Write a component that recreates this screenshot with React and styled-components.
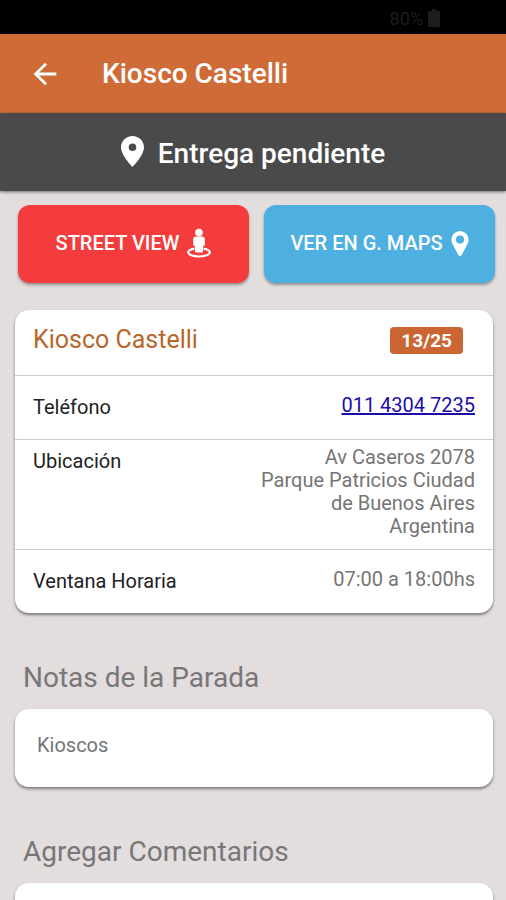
import React from 'react';
import styled, { createGlobalStyle } from 'styled-components';
import { MdArrowBack } from 'react-icons/md';

const GlobalStyle = createGlobalStyle`
  * {
    box-sizing: border-box;
  }

  body {
    margin: 0;
    background: #e3dddd;
    font-family: Roboto, 'Liberation Sans', sans-serif;
  }
`;

const StatusBar = styled.div`
  display: flex;
  align-items: center;
  justify-content: flex-end;
  gap: 5px;
  height: 34px;
  padding: 2px 66px 0 0;
  background: #000;
  color: #1d1d1d;
  font-size: 18px;
`;

const HeaderElement = styled.header`
  display: flex;
  align-items: center;
  gap: 40px;
  height: 79px;
  padding: 0 28px;
  background: #cf6b36;
  color: #fff;
`;

const BackButton = styled.button`
  display: flex;
  padding: 0;
  border: 0;
  background: none;
  color: inherit;
  cursor: pointer;
`;

const HeaderTitle = styled.h1`
  margin: 0;
  font-weight: 500;
  font-size: 28px;
  line-height: 32px;
`;

const StatusBanner = styled.div`
  display: flex;
  align-items: flex-start;
  justify-content: center;
  gap: 14px;
  height: 78px;
  padding-top: 23px;
  background: #4a4a4a;
  box-shadow: 0 1px 3px rgba(0, 0, 0, 0.5);
  color: #fff;
`;

const BannerText = styled.p`
  margin: 0;
  padding-top: 2px;
  font-weight: 500;
  font-size: 28px;
  line-height: 32px;
`;

const Actions = styled.div`
  display: flex;
  gap: 15px;
  padding: 14px 11px 0 18px;
`;

const ActionButton = styled.button`
  display: flex;
  flex: 1;
  align-items: center;
  justify-content: center;
  gap: 8px;
  height: 78px;
  padding: 0 0 2px;
  border: 0;
  border-radius: 12px;
  background: ${({ $color }) => $color};
  box-shadow: 0 2px 3px rgba(0, 0, 0, 0.35);
  color: #fff;
  font-family: inherit;
  font-weight: 500;
  font-size: 20px;
  line-height: 23px;
  white-space: nowrap;
  cursor: pointer;
`;

const Content = styled.main`
  padding: 27px 13px 15px 15px;
`;

const Card = styled.section`
  overflow: hidden;
  border-radius: 14px;
  background: #fff;
  box-shadow: 0 2px 3px rgba(0, 0, 0, 0.45);
`;

const Row = styled.div`
  display: flex;
  align-items: ${({ $top }) => ($top ? 'flex-start' : 'center')};
  justify-content: space-between;
  min-height: 64px;
  padding: 6px 18px 11px;

  & + & {
    border-top: 1px solid #cdcdcd;
  }
`;

const CardTitle = styled.h2`
  margin: 0;
  color: #b9652b;
  font-weight: 400;
  font-size: 25px;
  line-height: 48px;
`;

const Badge = styled.span`
  margin-right: 12px;
  padding: 0 11px;
  border-radius: 4px;
  background: #cb6531;
  color: #fff;
  font-weight: 700;
  font-size: 19px;
  line-height: 27px;
`;

const Label = styled.span`
  padding-top: 4px;
  color: #222;
  font-size: 20px;
  line-height: 23px;
`;

const Value = styled.span`
  max-width: 215px;
  color: #757575;
  font-size: 20px;
  line-height: 23px;
  text-align: right;
`;

const PhoneLink = styled.a`
  color: #1a0dab;
`;

const SectionTitle = styled.h2`
  margin: 0;
  padding: 48px 8px 15px;
  color: #777;
  font-weight: 400;
  font-size: 28px;
  line-height: 33px;
`;

const Note = styled.p`
  margin: 0;
  padding: 25px 22px 30px;
  color: #757575;
  font-size: 20px;
  line-height: 23px;
`;

const CommentInput = styled.textarea`
  display: block;
  width: 100%;
  height: 120px;
  padding: 24px 22px;
  border: 0;
  outline: 0;
  background: transparent;
  color: #757575;
  font-family: inherit;
  font-size: 20px;
  resize: none;
`;

function BatteryIcon() {
  return (
    <svg width="12" height="18" viewBox="0 0 12 18" aria-hidden="true">
      <path
        d="M4 0h4v2h2.500a1.500 1.500 0 0 1 1.500 1.500v13a1.500 1.500 0 0 1-1.500 1.500h-9A1.500 1.500 0 0 1 0 16.500v-13A1.500 1.500 0 0 1 1.500 2H4z"
        fill="currentColor"
      />
    </svg>
  );
}

function PlaceIcon() {
  return (
    <svg width="23" height="31" viewBox="0 0 23 31" aria-hidden="true">
      <path
        d="M11.500 0C5.100 0 0 5 0 11.300 0 19.500 11.500 31 11.500 31S23 19.500 23 11.300C23 5 17.900 0 11.500 0zm0 15a3.800 3.800 0 1 1 0-7.600 3.800 3.800 0 0 1 0 7.600z"
        fill="currentColor"
      />
    </svg>
  );
}

function StreetViewIcon() {
  return (
    <svg width="24" height="30" viewBox="0 0 24 30" aria-hidden="true">
      <path
        d="M7.500 20.600C3.800 21.300 1.200 22.700 1.200 24.300c0 2.400 4.800 4.200 10.800 4.200s10.800-1.800 10.800-4.200c0-1.600-2.600-3-6.300-3.700"
        fill="none"
        stroke="currentColor"
        strokeWidth="2.200"
      />
      <circle cx="12" cy="4.500" r="3.800" fill="currentColor" />
      <path
        d="M9 8.500h6a2.800 2.800 0 0 1 2.800 2.800v5.200a1.500 1.500 0 0 1-1.500 1.500H16v5a1.500 1.500 0 0 1-1.500 1.500h-5A1.500 1.500 0 0 1 8 23v-5h-.300a1.500 1.500 0 0 1-1.500-1.500v-5.200A2.800 2.800 0 0 1 9 8.500z"
        fill="currentColor"
      />
    </svg>
  );
}

function MapPinIcon() {
  return (
    <svg width="18" height="25" viewBox="0 0 18 25" aria-hidden="true">
      <path
        d="M9 0a8.600 8.600 0 0 0-8.600 8.600c0 1.600.4 2.800 1 4.100l5.900 11.200a1.900 1.900 0 0 0 3.400 0l5.900-11.200c.6-1.300 1-2.500 1-4.100A8.600 8.600 0 0 0 9 0zm0 4.500a4.100 4.100 0 1 1 0 8.200 4.100 4.100 0 0 1 0-8.200z"
        fill="currentColor"
      />
    </svg>
  );
}

export default function App() {
  return (
    <>
      <GlobalStyle />
      <StatusBar>
        80%
        <BatteryIcon />
      </StatusBar>
      <HeaderElement>
        <BackButton type="button" aria-label="Volver">
          <MdArrowBack size={ 34 } />
        </BackButton>
        <HeaderTitle>Kiosco Castelli</HeaderTitle>
      </HeaderElement>
      <StatusBanner>
        <PlaceIcon />
        <BannerText>Entrega pendiente</BannerText>
      </StatusBanner>
      <Actions>
        <ActionButton type="button" $color="#f53c3c">
          STREET VIEW
          <StreetViewIcon />
        </ActionButton>
        <ActionButton type="button" $color="#4db0e1">
          VER EN G. MAPS
          <MapPinIcon />
        </ActionButton>
      </Actions>
      <Content>
        <Card>
          <Row>
            <CardTitle>Kiosco Castelli</CardTitle>
            <Badge>13/25</Badge>
          </Row>
          <Row>
            <Label>Teléfono</Label>
            <Value>
              <PhoneLink href="tel:01143047235">011 4304 7235</PhoneLink>
            </Value>
          </Row>
          <Row $top>
            <Label>Ubicación</Label>
            <Value>Av Caseros 2078 Parque Patricios Ciudad de Buenos Aires Argentina</Value>
          </Row>
          <Row>
            <Label>Ventana Horaria</Label>
            <Value>07:00 a 18:00hs</Value>
          </Row>
        </Card>
        <SectionTitle>Notas de la Parada</SectionTitle>
        <Card>
          <Note>Kioscos</Note>
        </Card>
        <SectionTitle>
          <label htmlFor="comments">Agregar Comentarios</label>
        </SectionTitle>
        <Card>
          <CommentInput id="comments" />
        </Card>
      </Content>
    </>
  );
}
